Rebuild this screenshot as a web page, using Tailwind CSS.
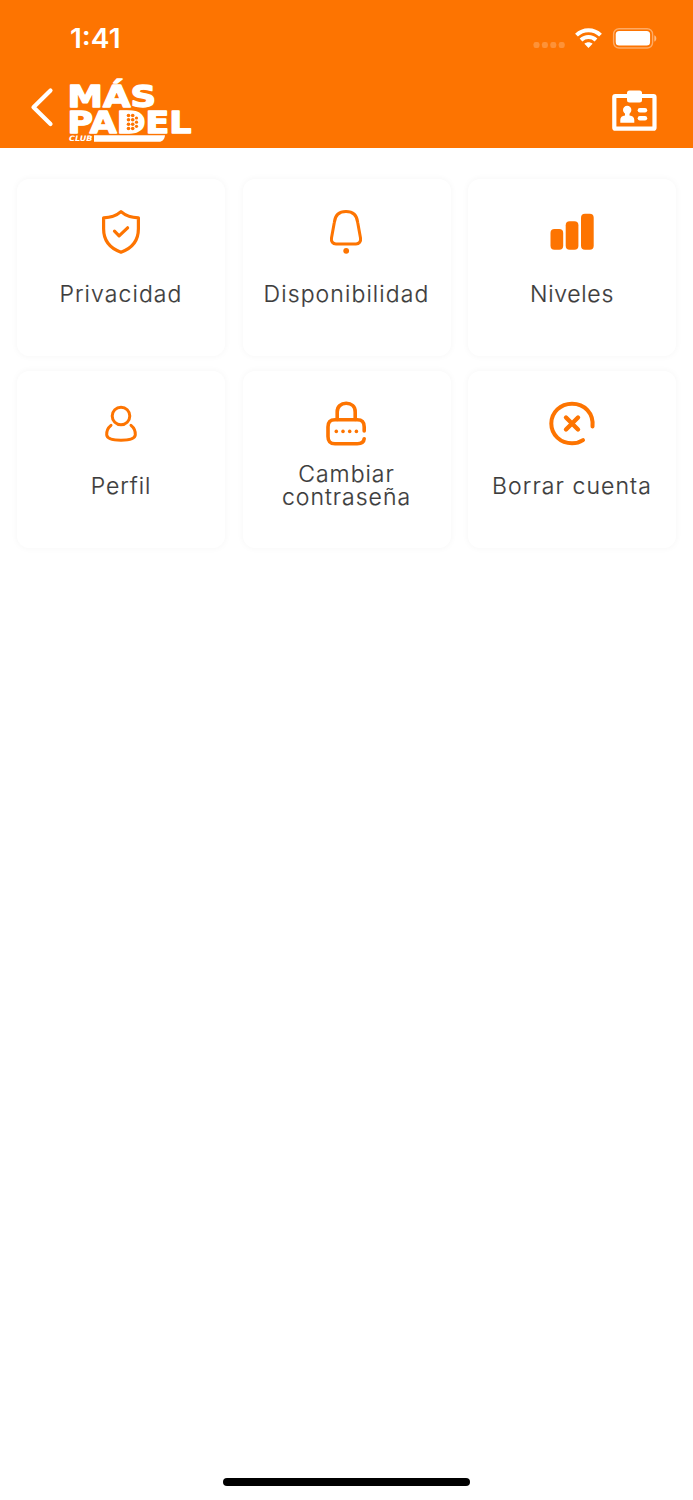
<!DOCTYPE html>
<html lang="es">
<head>
<meta charset="utf-8">
<title>Más Padel Club</title>
<script src="https://cdn.jsdelivr.net/npm/@tailwindcss/browser@4"></script>
</head>
<body class="bg-white font-['Inter','Liberation_Sans',sans-serif]">
<div class="flex h-[1500px] w-[693px] flex-col overflow-hidden bg-white">
  <header class="h-[148px] shrink-0 bg-[#fd7401] text-white">
    <div class="flex h-[76px] items-center justify-between pr-[36px] pl-[70px]">
      <svg class="h-[30px] w-[54px]" viewBox="0 0 54 30" fill="#fff"><text x="0" y="24.500" font-size="26.500" font-weight="600" textLength="50.500" lengthAdjust="spacingAndGlyphs">1:41</text></svg>
      <div class="flex items-center gap-[10px]">
        <svg class="mt-[13px] h-[6px] w-[32px]" viewBox="0 0 32 6" fill="#fff" fill-opacity=".22"><rect x="0.500" width="6" height="6" rx="2.2"/><rect x="8.900" width="6" height="6" rx="2.2"/><rect x="17.300" width="6" height="6" rx="2.2"/><rect x="25.700" width="6" height="6" rx="2.2"/></svg>
        <svg class="h-[20px] w-[27px]" viewBox="0 0 27 20" fill="none" stroke="#fff" stroke-width="4"><path d="M1.500 7.200C8.200.6 18.800.6 25.500 7.200"/><path d="M6 12c4.300-4 10.700-4 15 0"/><path d="M13.500 20l-4.100-4.300c2.400-2 5.800-2 8.200 0z" fill="#fff" stroke="none"/></svg>
        <svg class="h-[21px] w-[45px]" viewBox="0 0 45 21"><rect x="1.600" y=".7" width="39" height="19.300" rx="5.500" fill="none" stroke="#fff" stroke-opacity=".4" stroke-width="1.400"/><rect x="3.700" y="3" width="34.400" height="14.500" rx="3.500" fill="#fff"/><path d="M42.300 7.200c2.700 1 2.700 5.400 0 6.400z" fill="#fff" fill-opacity=".5"/></svg>
      </div>
    </div>
    <div class="flex h-[72px] items-start pr-[36px] pl-[30px]">
      <svg class="mt-[11px] h-[40px] w-[24px]" viewBox="0 0 24 40" fill="none" stroke="#fff" stroke-width="4.200" stroke-linecap="round" stroke-linejoin="round"><path d="M20.500 3.500L3.500 20.300l17 16.700"/></svg>
      <svg class="ml-[14px] h-[68px] w-[125px]" viewBox="68 76 125 68" fill="#fff" font-family="DejaVu Sans" font-weight="700">
        <text x="67.500" y="107.300" font-size="31" textLength="88.500" lengthAdjust="spacingAndGlyphs" stroke="#fff" stroke-width="1.400" stroke-linejoin="round">MÁS</text>
        <text x="67.500" y="132.800" font-size="30" textLength="124" lengthAdjust="spacingAndGlyphs" stroke="#fff" stroke-width="1.400" stroke-linejoin="round">PADEL</text>
        <path d="M126 113.500h8.500l4 4v9l-4 4.500H126z"/>
        <g fill="#fd7401"><circle cx="128.500" cy="115.500" r="1.800"/><circle cx="132.700" cy="115.500" r="1.800"/><circle cx="128.500" cy="119.800" r="1.800"/><circle cx="132.700" cy="119.800" r="1.800"/><circle cx="136.500" cy="118" r="1.600"/><circle cx="128.500" cy="124.200" r="1.800"/><circle cx="132.700" cy="124.200" r="1.800"/><circle cx="136.500" cy="122.200" r="1.600"/><circle cx="136.500" cy="126.300" r="1.600"/><circle cx="128.500" cy="128.500" r="1.800"/><circle cx="132.700" cy="128.500" r="1.800"/></g>
        <text x="69" y="141.300" font-size="7.400" font-style="italic" textLength="23.500" lengthAdjust="spacingAndGlyphs">CLUB</text>
        <path d="M94 135.300h71c-.5 4-2.500 6.500-6 6.500h-65z"/>
      </svg>
      <svg class="mt-[14px] ml-auto h-[42px] w-[46px]" viewBox="611 90 46 42"><path fill="none" stroke="#fff" stroke-width="4.200" stroke-linejoin="round" d="M615.300 96h38.200q1 0 1 1v30.700q0 1-1 1h-38.200q-1 0-1-1V97q0-1 1-1z"/><rect x="627" y="90.600" width="15" height="12" rx="2.500" fill="#fff"/><g fill="#fff"><circle cx="627.200" cy="110" r="4.200"/><path d="M625 112h4.500v3.500c3 .2 4.800 1.800 4.800 4.500v2.700h-14V120c0-2.700 1.700-4.300 4.700-4.500z"/><rect x="637.700" y="108" width="9.500" height="4.400" rx="2.200"/><rect x="637.700" y="116" width="9.500" height="4.400" rx="2.200"/></g></svg>
    </div>
  </header>
  <main class="grid grid-cols-[208px_208px_208px] gap-x-[17.500px] gap-y-[15px] px-[17px] pt-[31px] text-center text-[23px] leading-[23px] font-light text-[#3c3c3c] [-webkit-text-stroke:0.2px_#3c3c3c]">
    <section class="flex h-[177px] flex-col items-center rounded-[12px] bg-white pt-[23px] shadow-[0_0_7px_rgba(0,0,0,0.045)]">
      <svg class="h-[60px] w-[70px]" viewBox="1 0 70 60" fill="none" stroke="#fd7401" stroke-width="3.200" stroke-linejoin="round" stroke-linecap="round"><path d="M36 9.600c-4.500 4-9.500 6-17.400 6.200v11c0 11.400 6.500 19.600 17.400 23.400 10.900-3.800 17.400-12 17.400-23.400v-11C45.500 15.600 40.500 13.600 36 9.600z"/><path d="M29.500 29.200l4.600 4.600 8.500-8"/></svg>
      <p class="flex h-[64px] items-center justify-center tracking-[1.100px]">Privacidad</p>
    </section>
    <section class="flex h-[177px] flex-col items-center rounded-[12px] bg-white pt-[23px] shadow-[0_0_7px_rgba(0,0,0,0.045)]">
      <svg class="h-[60px] w-[70px]" viewBox="2 2 70 60" fill="none" stroke="#fd7401" stroke-width="3"><path d="M24.300 22.500C25 15.500 29.300 11.500 36 11.500S47 15.500 47.700 22.500l2.800 15.500c.6 3.500-1.300 5.900-4.500 5.900H26c-3.200 0-5.100-2.400-4.500-5.900z"/><circle cx="36.200" cy="50.800" r="2.900" fill="#fd7401" stroke="none"/></svg>
      <p class="flex h-[64px] items-center justify-center tracking-[1.100px]">Disponibilidad</p>
    </section>
    <section class="flex h-[177px] flex-col items-center rounded-[12px] bg-white pt-[23px] shadow-[0_0_7px_rgba(0,0,0,0.045)]">
      <svg class="h-[60px] w-[70px]" viewBox="2 2 70 60" fill="#fd7401"><rect x="15.500" y="29" width="12.700" height="20.700" rx="4"/><rect x="30.700" y="21.300" width="12.700" height="28.400" rx="4"/><rect x="46" y="13.700" width="12.700" height="36" rx="4"/></svg>
      <p class="flex h-[64px] items-center justify-center tracking-[0.700px]">Niveles</p>
    </section>
    <section class="flex h-[177px] flex-col items-center rounded-[12px] bg-white pt-[23px] shadow-[0_0_7px_rgba(0,0,0,0.045)]">
      <svg class="h-[60px] w-[70px]" viewBox="1 1.500 70 60" fill="none" stroke="#fd7401" stroke-width="3" stroke-linecap="round"><circle cx="36" cy="23.500" r="8.800"/><path d="M26 32.800c-3.200 2.600-4.600 5.800-4.300 9.600C22 46 28 47.700 36 47.700s14-1.700 14.300-5.300c.3-3.800-1.100-7-4.300-9.600"/></svg>
      <p class="flex h-[64px] items-center justify-center tracking-[0.900px]">Perfil</p>
    </section>
    <section class="flex h-[177px] flex-col items-center rounded-[12px] bg-white pt-[23px] shadow-[0_0_7px_rgba(0,0,0,0.045)]">
      <svg class="h-[60px] w-[70px]" viewBox="2 2 70 60" fill="none" stroke="#fd7401" stroke-width="3.600" stroke-linecap="round"><path d="M54.200 39v-4c0-5-2-7.200-7-7.200H25c-5 0-7 2.200-7 7.200v9.500c0 5 2 7.200 7 7.200h22.200c4.600 0 6.700-1.300 7-5"/><path d="M27.200 27.500V20c0-5.300 3.700-8.700 9-8.700s9 3.400 9 8.700v7.500"/><g fill="#fd7401" stroke="none"><circle cx="26.300" cy="39.400" r="1.800"/><circle cx="33" cy="39.400" r="1.800"/><circle cx="39.700" cy="39.400" r="1.800"/><circle cx="46.400" cy="39.400" r="1.800"/></g></svg>
      <p class="flex h-[64px] w-[150px] items-center justify-center tracking-[1px]">Cambiar contraseña</p>
    </section>
    <section class="flex h-[177px] flex-col items-center rounded-[12px] bg-white pt-[23px] shadow-[0_0_7px_rgba(0,0,0,0.045)]">
      <svg class="h-[60px] w-[70px]" viewBox="2 2 70 60" fill="none" stroke="#fd7401" stroke-width="4" stroke-linecap="round"><path d="M57.500 34.500C58.800 21 49.500 11.700 37 11.700c-11.500 0-20.700 8.600-20.700 19.800S25.500 51.300 37 51.300c4.200 0 7.500-.9 11-3.200"/><path d="M31 25.500l12 12m0-12l-12 12" stroke-width="4.400"/></svg>
      <p class="flex h-[64px] items-center justify-center tracking-[1.100px]">Borrar cuenta</p>
    </section>
  </main>
  <div class="mx-auto mt-auto mb-[14px] h-[8px] w-[247px] rounded-full bg-black"></div>
</div>
</body>
</html>
